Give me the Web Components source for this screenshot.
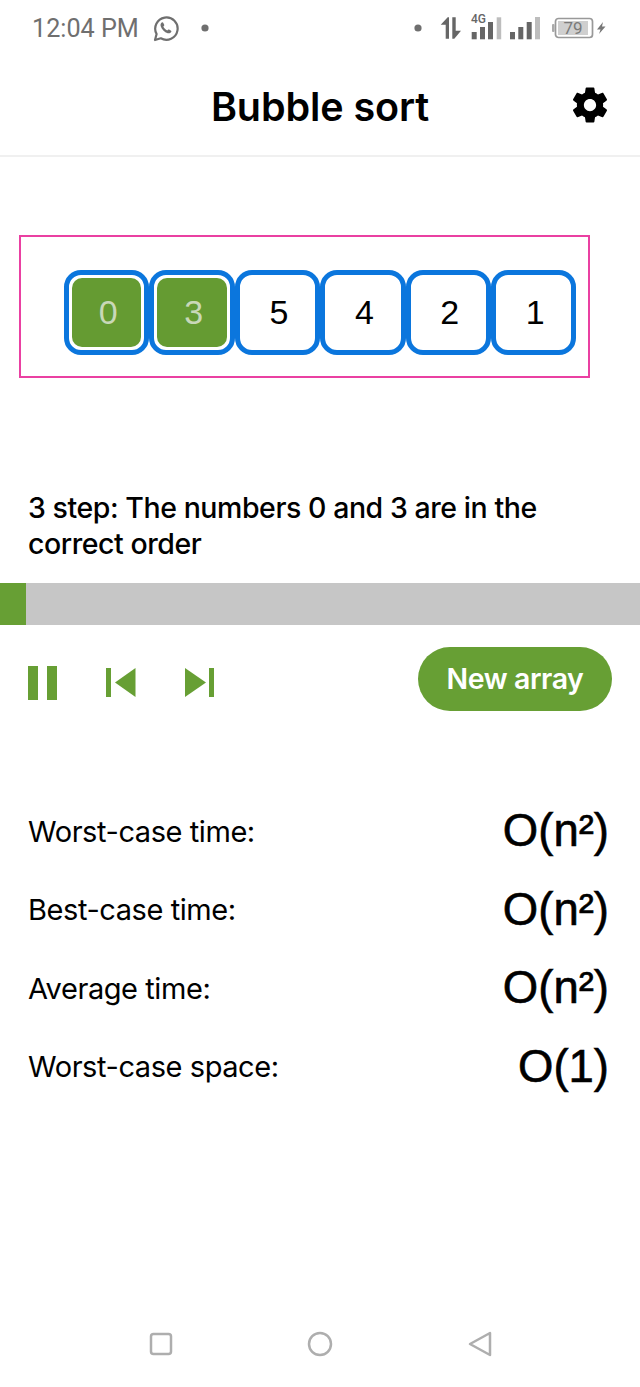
<!DOCTYPE html>
<html><head><meta charset="utf-8"><style>
html,body{margin:0;padding:0;background:#fff}
body{width:640px;height:1387px;overflow:hidden;font-family:Inter,"Liberation Sans",sans-serif;display:flex;flex-direction:column}
</style></head><body>
<status-bar></status-bar>
<app-header>Bubble sort</app-header>
<sort-stage>
<sort-cell done>0</sort-cell><sort-cell done>3</sort-cell><sort-cell>5</sort-cell><sort-cell>4</sort-cell><sort-cell>2</sort-cell><sort-cell>1</sort-cell>
</sort-stage>
<step-text>3 step: The numbers 0 and 3 are in the correct order</step-text>
<progress-bar></progress-bar>
<control-row></control-row>
<complexity-list>
<complexity-row label="Worst-case time:">O(n²)</complexity-row>
<complexity-row label="Best-case time:">O(n²)</complexity-row>
<complexity-row label="Average time:">O(n²)</complexity-row>
<complexity-row label="Worst-case space:">O(1)</complexity-row>
</complexity-list>
<nav-bar></nav-bar>
<script>
function def(name,html){customElements.define(name,class extends HTMLElement{constructor(){super();this.attachShadow({mode:'open'}).innerHTML=typeof html==='function'?html(this):html}})}
def('status-bar',`<style>
:host{display:flex;align-items:center;height:56px;box-sizing:border-box;padding:0 0 0 32px;color:#6f6f6f;font:400 25.200px Roboto,"Liberation Sans",sans-serif}
.t{width:120px;white-space:nowrap;padding-top:1px}
svg{display:block;flex:none}
.sp{flex:1}
.net{position:relative;width:32px;height:28px;margin-right:6px;flex:none}
.net span{position:absolute;left:0;top:-1.500px;font:500 12px/12px Roboto,"Liberation Sans",sans-serif;color:#666}
</style>
<span class="t">12:04 PM</span>
<svg width="27" height="27" viewBox="0 0 27 27"><path d="M3 25l1.6-6A11.2 11.2 0 1 1 8.8 23.3z" fill="none" stroke="#6f6f6f" stroke-width="2.2" stroke-linejoin="round"/><path d="M9.7 7.6c-.9.8-1.5 2-1 3.6 1 3.2 3.7 6 7 7 1.5.4 2.8-.2 3.5-1.200.3-.5.3-1-.1-1.300l-2-1.200c-.4-.2-.8-.1-1.100.2l-.7.8c-1.800-.7-3.200-2.100-4-3.900l.7-.7c.3-.3.3-.7.200-1.100l-1-2.100c-.3-.5-.9-.7-1.500-.3z" fill="#6f6f6f"/></svg>
<svg width="10" height="10" viewBox="0 0 10 10" style="margin-left:21px"><circle cx="5" cy="5" r="3.6" fill="#6f6f6f"/></svg>
<span class="sp"></span>
<svg width="10" height="10" viewBox="0 0 10 10" style="margin-right:17px"><circle cx="5" cy="5" r="3.6" fill="#6f6f6f"/></svg>
<svg width="23" height="24" viewBox="0 0 23 24" style="margin-right:8px"><path d="M.7 8.700 7.700 1.300H9v21.400H5.700V8.700zM12.300 1.300h3.400v13.400H21L14.300 22.700h-2z" fill="#666"/></svg>
<div class="net"><svg width="32" height="28" viewBox="0 0 32 28"><rect x=".7" y="18" width="5" height="7.300" fill="#666"/><rect x="9" y="13" width="5" height="12.300" fill="#666"/><rect x="17" y="8" width="5" height="17.300" fill="#666"/><rect x="25.700" y="3.300" width="4.500" height="22" fill="#bdbdbd"/></svg><span>4G</span></div>
<svg width="32" height="26" viewBox="0 0 32 26" style="margin-right:11px"><rect x="1" y="17" width="5" height="7.300" fill="#666"/><rect x="9.300" y="12" width="5" height="12.300" fill="#666"/><rect x="17.700" y="7" width="5" height="17.300" fill="#666"/><rect x="26" y="2" width="5" height="22.300" fill="#bdbdbd"/></svg>
<svg width="54" height="22" viewBox="0 0 54 22" style="margin-right:34px"><rect x="0" y="7" width="2.500" height="8" rx="1" fill="#aaa"/><rect x="3.500" y="1.500" width="37" height="19" rx="3" fill="none" stroke="#999" stroke-width="1.700"/><rect x="6" y="4" width="30" height="14" fill="#cfcfcf"/><text x="21" y="17" text-anchor="middle" font-family="Roboto,'Liberation Sans',sans-serif" font-size="17" fill="#7a7a7a">79</text><path d="M51 5 45 12.500h3.500L47 17l6.500-7.500H50z" fill="#777"/></svg>`);
def('app-header',`<style>
:host{display:flex;align-items:center;justify-content:center;position:relative;height:101px;box-sizing:border-box;border-bottom:2px solid #f0f0f0;padding-top:2px;font:600 39.500px Inter,"Liberation Sans",sans-serif;color:#000;letter-spacing:-.1px}
svg{position:absolute;left:569px;top:28px}
</style><slot></slot>
<svg width="42" height="42" viewBox="0 0 24 24"><path fill="#000" d="M19.430 12.980c.04-.32.07-.64.07-.98s-.03-.66-.07-.98l2.110-1.650c.19-.15.24-.42.120-.64l-2-3.460c-.12-.22-.39-.3-.61-.22l-2.490 1c-.52-.4-1.080-.73-1.690-.98l-.38-2.650A.488.488 0 0 0 14 2h-4c-.25 0-.46.180-.49.420l-.38 2.650c-.61.250-1.170.590-1.690.98l-2.490-1c-.23-.09-.49 0-.61.220l-2 3.460c-.13.220-.07.490.12.640l2.110 1.650c-.04.320-.07.650-.07.980s.03.660.07.980l-2.110 1.650c-.19.150-.24.420-.12.640l2 3.460c.12.220.39.300.61.220l2.490-1c.52.400 1.080.730 1.690.980l.38 2.650c.03.240.24.420.49.420h4c.25 0 .46-.180.49-.420l.38-2.650c.61-.250 1.170-.590 1.690-.980l2.490 1c.23.090.49 0 .61-.220l2-3.460c.12-.220.07-.490-.12-.640l-2.110-1.650zM12 15.500c-1.930 0-3.500-1.570-3.500-3.500s1.570-3.500 3.500-3.500 3.500 1.570 3.500 3.500-1.570 3.500-3.500 3.500z"/></svg>`);
def('sort-stage',`<style>
:host{display:flex;box-sizing:border-box;width:571px;height:143px;margin:78px 0 0 19px;border:2px solid #ea40a2;padding:33px 0 0 43px}
</style><slot></slot>`);
def('sort-cell',h=>`<style>
:host{display:block;box-sizing:border-box;flex:none;width:85.400px;height:85px;border:5px solid #0b76dd;border-radius:17px;padding:3px;background:#fff}
div{height:100%;display:flex;align-items:center;justify-content:center;border-radius:10px;padding-left:3px;box-sizing:border-box;font:400 34px "Liberation Sans",Arial,sans-serif;color:#000}
:host([done]) div{background:#659b32;color:#c9d8b8}
</style><div><slot></slot></div>`);
def('step-text',`<style>
:host{display:block;margin:112px 0 0 28px;width:570px;font:500 28.500px/35.500px Inter,"Liberation Sans",sans-serif;letter-spacing:-.44px;color:#000}
</style><slot></slot>`);
def('progress-bar',`<style>
:host{display:block;margin-top:22px;height:42px;background:#c6c6c6}
div{width:26px;height:100%;background:#679f34}
</style><div></div>`);
def('control-row',`<style>
:host{display:flex;align-items:center;margin-top:22px;padding:0 28px;height:64px}
svg{display:block;flex:none;position:relative;top:3.500px}
.sp{flex:1}
.b{width:194px;height:64px;border-radius:32px;background:#679f34;color:#fff;font:600 28.500px Inter,"Liberation Sans",sans-serif;display:flex;align-items:center;justify-content:center;letter-spacing:-.45px;padding-bottom:2px;box-sizing:border-box}
</style>
<svg width="30" height="34" viewBox="0 0 30 34"><rect width="10" height="34" fill="#679f34"/><rect x="19" width="10" height="34" fill="#679f34"/></svg>
<svg width="30" height="30" viewBox="0 0 30 30" style="margin-left:48px"><rect width="5" height="29" fill="#679f34"/><path d="M29.500 0v29L9 14.500z" fill="#679f34"/></svg>
<svg width="30" height="30" viewBox="0 0 30 30" style="margin-left:49px"><path d="M0 0v29L21 14.500z" fill="#679f34"/><rect x="24" width="5" height="29" fill="#679f34"/></svg>
<span class="sp"></span>
<div class="b">New array</div>`);
def('complexity-list',`<style>
:host{display:flex;flex-direction:column;margin-top:81px;padding:0 31px 0 28px}
</style><slot></slot>`);
def('complexity-row',h=>`<style>
:host{display:flex;align-items:center;justify-content:space-between;height:78.500px;color:#000}
.l{font:400 29px Inter,"Liberation Sans",sans-serif;letter-spacing:-.43px}
.v{font:400 45.500px "Liberation Sans",Arial,sans-serif;-webkit-text-stroke:.6px #000}
</style><span class="l">${h.getAttribute('label')}</span><span class="v"><slot></slot></span>`);
def('nav-bar',`<style>
:host{display:flex;position:absolute;left:0;right:0;top:1331px;height:26px;align-items:center}
svg{position:absolute;top:0}
</style>
<svg style="left:149px" width="24" height="26" viewBox="0 0 24 26"><rect x="2" y="3" width="20" height="20" rx="2.500" fill="none" stroke="#aeaeae" stroke-width="2.500"/></svg>
<svg style="left:307px" width="26" height="26" viewBox="0 0 26 26"><circle cx="13" cy="13" r="11" fill="none" stroke="#aeaeae" stroke-width="2.500"/></svg>
<svg style="left:467px" width="26" height="26" viewBox="0 0 26 26"><path d="M23 2v22L3 13z" fill="none" stroke="#aeaeae" stroke-width="2.500" stroke-linejoin="round"/></svg>`);
</script>
</body></html>
